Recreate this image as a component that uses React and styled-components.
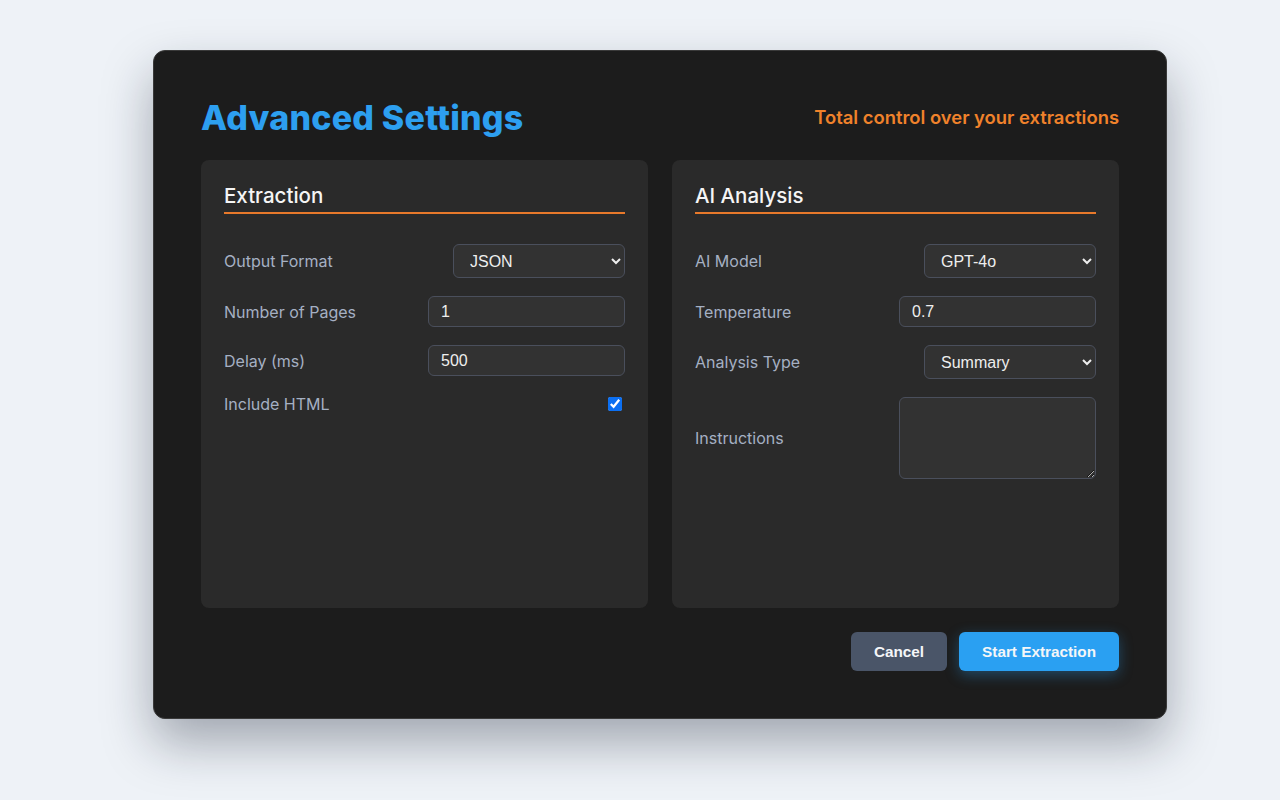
import React from "react";
import styled, { createGlobalStyle } from "styled-components";

const Global = createGlobalStyle`
  html, body { margin: 0; padding: 0; }
  body {
    background: #eef2f7;
    font-family: Inter, "Noto Sans", sans-serif;
    width: 1280px;
    height: 800px;
    overflow: hidden;
  }
  * { box-sizing: border-box; }
`;

const Page = styled.div`
  padding-top: 50px;
  padding-left: 153px;
`;

const Card = styled.div`
  width: 1014px;
  height: 669px;
  background: #1c1c1c;
  border: 1px solid #3a3a3a;
  border-radius: 12px;
  padding: 47px 47px 46px 47px;
  box-shadow: 0 24px 50px rgba(20, 30, 45, 0.35);
  display: flex;
  flex-direction: column;
`;

const Header = styled.div`
  display: flex;
  justify-content: space-between;
  align-items: center;
  height: 38px;
  margin-bottom: 24px;
`;

const Title = styled.h1`
  margin: 0;
  font-family: Inter, sans-serif;
  font-weight: 800;
  font-size: 34px;
  letter-spacing: 0.2px;
  color: #2d9ff0;
`;

const Subtitle = styled.div`
  font-size: 18.4px;
  font-weight: 600;
  color: #f0822b;
`;

const Columns = styled.div`
  display: grid;
  grid-template-columns: 1fr 1fr;
  gap: 24px;
  height: 448px;
`;

const Panel = styled.section`
  background: #2a2a2a;
  border-radius: 8px;
  padding: 24px 23px;
`;

const PanelTitle = styled.h2`
  margin: 0 0 30px 0;
  font-size: 20.5px;
  font-weight: 500;
  line-height: 24px;
  color: #f5f5f5;
  padding-bottom: 4px;
  border-bottom: 2px solid #e8792b;
`;

const Row = styled.div`
  display: flex;
  justify-content: space-between;
  align-items: center;
  margin-bottom: 18px;
`;

const Label = styled.label`
  font-size: 16px;
  color: #a5b0c3;
`;

const controlBase = `
  font-family: "Liberation Sans", Arial, sans-serif;
  font-size: 16px;
  color: #eeeeee;
  background: #323232;
  border: 1px solid #4a4f5c;
  border-radius: 6px;
  color-scheme: dark;
  outline: none;
`;

const Select = styled.select`
  ${controlBase}
  width: 172px;
  height: 34px;
  padding: 0 8px 0 12px;
`;

const Input = styled.input`
  ${controlBase}
  width: 197px;
  height: 31px;
  padding: 0 12px;
`;

const TextArea = styled.textarea`
  ${controlBase}
  width: 197px;
  height: 82px;
  padding: 8px 12px;
`;

const Check = styled.input`
  width: 14px;
  height: 14px;
  margin: 0 3px 0 0;
  accent-color: #0b6ff2;
`;

const Footer = styled.div`
  display: flex;
  justify-content: flex-end;
  gap: 12px;
  margin-top: 24px;
`;

const Button = styled.button`
  font-family: "Liberation Sans", Arial, sans-serif;
  font-weight: 700;
  font-size: 15.3px;
  color: #f4f6f8;
  height: 39px;
  padding: 0 23px;
  border: none;
  border-radius: 6px;
  background: ${(p) => (p.$primary ? "#2aa0f2" : "#4a5568")};
  box-shadow: ${(p) =>
    p.$primary ? "0 4px 14px rgba(42, 160, 242, 0.35)" : "none"};
`;

export default function App() {
  return (
    <>
      <Global />
      <Page>
        <Card>
          <Header>
            <Title>Advanced Settings</Title>
            <Subtitle>Total control over your extractions</Subtitle>
          </Header>
          <Columns>
            <Panel>
              <PanelTitle>Extraction</PanelTitle>
              <Row>
                <Label>Output Format</Label>
                <Select defaultValue="JSON">
                  <option>JSON</option>
                  <option>CSV</option>
                  <option>XML</option>
                </Select>
              </Row>
              <Row>
                <Label>Number of Pages</Label>
                <Input type="text" defaultValue="1" />
              </Row>
              <Row>
                <Label>Delay (ms)</Label>
                <Input type="text" defaultValue="500" />
              </Row>
              <Row>
                <Label>Include HTML</Label>
                <Check type="checkbox" defaultChecked />
              </Row>
            </Panel>
            <Panel>
              <PanelTitle>AI Analysis</PanelTitle>
              <Row>
                <Label>AI Model</Label>
                <Select defaultValue="GPT-4o">
                  <option>GPT-4o</option>
                  <option>GPT-4</option>
                </Select>
              </Row>
              <Row>
                <Label>Temperature</Label>
                <Input type="text" defaultValue="0.7" />
              </Row>
              <Row>
                <Label>Analysis Type</Label>
                <Select defaultValue="Summary">
                  <option>Summary</option>
                  <option>Detailed</option>
                </Select>
              </Row>
              <Row>
                <Label>Instructions</Label>
                <TextArea />
              </Row>
            </Panel>
          </Columns>
          <Footer>
            <Button>Cancel</Button>
            <Button $primary>Start Extraction</Button>
          </Footer>
        </Card>
      </Page>
    </>
  );
}
